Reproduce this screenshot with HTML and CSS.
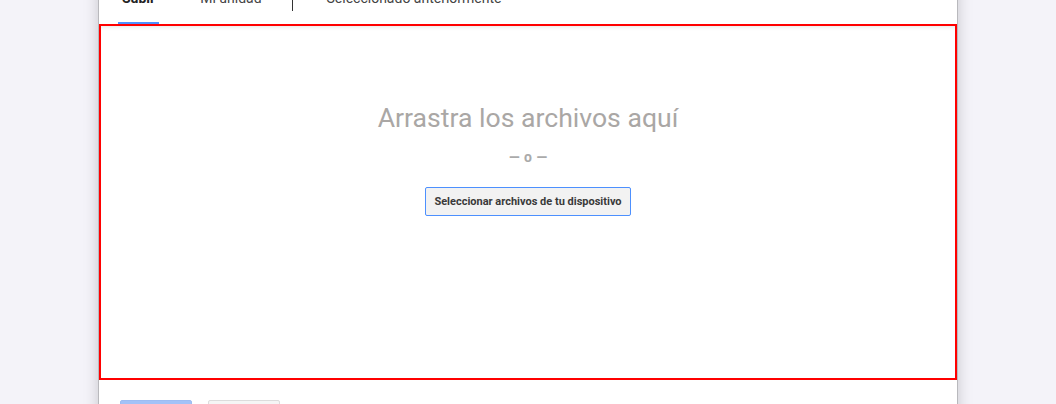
FILE: index.html
```html
<!DOCTYPE html>
<html lang="es">
<head>
<meta charset="utf-8">
<title>Subir archivos</title>
<link rel="stylesheet" href="styles.css">
</head>
<body>
<div class="dialog">
  <div class="tabs">
    <div class="tab active">Subir</div>
    <div class="tab tab-drive">Mi unidad</div>
    <div class="divider"></div>
    <div class="tab tab-recent">Seleccionado anteriormente</div>
  </div>
  <div class="dropzone">
    <div class="drop-title">Arrastra los archivos aquí</div>
    <div class="drop-or">— o —</div>
    <button class="select-btn" type="button">Seleccionar archivos de tu dispositivo</button>
  </div>
  <div class="footer">
    <button class="btn btn-primary" type="button">Subir</button>
    <button class="btn btn-cancel" type="button">Cancelar</button>
  </div>
</div>
</body>
</html>
```
FILE: styles.css
```css
html, body {
  margin: 0;
  padding: 0;
  height: 100%;
  overflow: hidden;
}
body {
  background: #f4f3f9;
  font-family: Roboto, "Liberation Sans", Arial, sans-serif;
}
.dialog {
  margin-left: 98px;
  width: 858px;
  background: #fff;
  border-left: 1px solid #b9b9bd;
  border-right: 1px solid #b9b9bd;
  box-shadow: 0 4px 14px rgba(0, 0, 0, 0.18);
  height: 460px;
}
.tabs {
  display: flex;
  align-items: flex-end;
  height: 44px;
  margin-top: -20px;
  padding-left: 19px;
}
.tab {
  height: 44px;
  box-sizing: border-box;
  padding: 8px 4px 0;
  font-size: 14px;
  line-height: 20px;
  color: #444;
  border-bottom: 2px solid transparent;
  white-space: nowrap;
}
.tab.active {
  font-weight: bold;
  color: #222;
  border-bottom-color: #4d90fe;
}
.tab-drive {
  margin-left: 37px;
}
.divider {
  align-self: flex-start;
  width: 1px;
  height: 31px;
  background: #333;
  margin-left: 26px;
}
.tab-recent {
  margin-left: 30px;
}
.dropzone {
  box-sizing: border-box;
  height: 356px;
  border: 2px solid #ff0000;
  box-shadow: inset 0 4px 4px -3px rgba(0, 0, 0, 0.1);
  display: flex;
  flex-direction: column;
  align-items: center;
  padding-top: 76px;
}
.drop-title {
  font-size: 26.6px;
  line-height: 32px;
  color: #aaa7a5;
}
.drop-or {
  margin-top: 15px;
  font-size: 14px;
  line-height: 16px;
  font-weight: bold;
  color: #aaa;
  word-spacing: 1px;
}
.select-btn {
  margin-top: 22px;
  height: 29px;
  width: 206px;
  padding: 0;
  border: 1px solid #4d90fe;
  border-radius: 2px;
  background: #f2f2f2;
  color: #3a3a3a;
  font-family: Roboto, "Liberation Sans", Arial, sans-serif;
  font-size: 11px;
  font-weight: bold;
  cursor: pointer;
}
.footer {
  display: flex;
  gap: 16px;
  padding: 20px 0 0 21px;
}
.btn {
  width: 72px;
  height: 29px;
  border-radius: 2px;
  font-family: Roboto, "Liberation Sans", Arial, sans-serif;
  font-size: 11px;
  font-weight: bold;
}
.btn-primary {
  background: #a3c2f7;
  border: 1px solid #9dbcf2;
  color: #fff;
}
.btn-cancel {
  background: #f5f5f5;
  border: 1px solid #dcdcdc;
  color: #444;
}
```
